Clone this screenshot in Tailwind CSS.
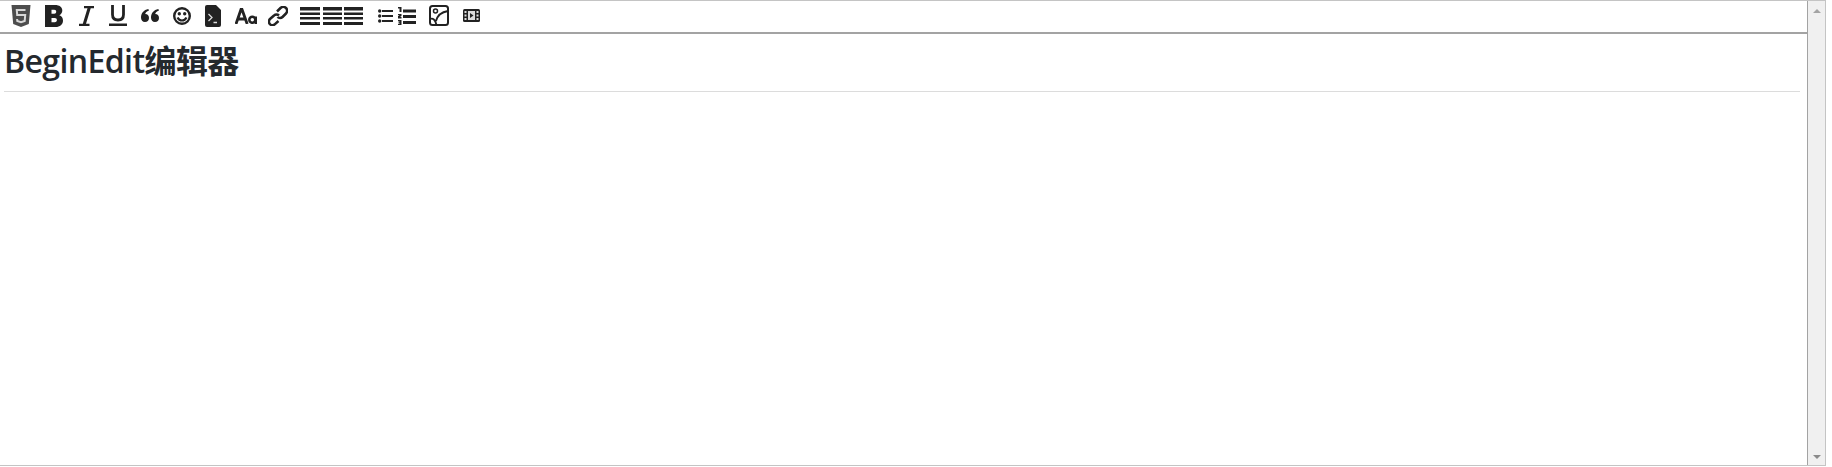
<!DOCTYPE html>
<html lang="zh">
<head>
<meta charset="utf-8">
<title>BeginEdit</title>
<script src="https://cdn.jsdelivr.net/npm/@tailwindcss/browser@4"></script>
</head>
<body class="bg-white overflow-hidden">
<div class="w-[1826px] h-[466px] flex border-t border-r border-b border-[#c4c4c4]">
  <div class="flex-1 min-w-0 flex flex-col border-r border-[#a3a3a3]">
    <div class="h-[33px] shrink-0 flex items-center pl-[11px] pb-[2px] border-b-2 border-[#a3a3a3] text-[#222]">
      <svg class="w-[20px] h-[22px] shrink-0" viewBox="0 0 20 22"><path fill="#4d4d4d" d="M0.500 0h19l-1.700 19L10 22l-7.800-3z"/><path fill="none" stroke="#d8d8d8" stroke-width="2" d="M14.500 5H5.800l.4 5h8l-.5 6-3.700 1.100L6.300 16l-.2-2"/></svg>
      <svg class="w-[18px] h-[22px] shrink-0 ml-[14px]" viewBox="0 0 18 22"><path fill="#222" fill-rule="evenodd" d="M0 0h10c4.500 0 7.300 2.200 7.300 5.500 0 2.200-1.200 3.900-3 4.700 2.500.7 3.700 2.700 3.700 5.300C18 19.500 15 22 10.500 22H0zM6.500 4.800v3.900h2.700c1.300 0 2-.8 2-2s-.7-1.900-2-1.900zM6.500 13v4.200h3.200c1.500 0 2.200-.8 2.200-2.100S11.200 13 9.700 13z"/></svg>
      <svg class="w-[15px] h-[20px] shrink-0 ml-[16px]" viewBox="0 0 15 20"><path fill="#222" d="M5 0h10v2.200h-3.300L7 17.800h3.500V20H0v-2.200h3.800L8.500 2.200H5z"/></svg>
      <svg class="w-[18px] h-[21px] shrink-0 ml-[15px]" viewBox="0 0 18 21"><path fill="none" stroke="#222" stroke-width="2.800" d="M3.500 0v9.500c0 3.500 2 5.500 5.500 5.500s5.500-2 5.500-5.500V0"/><path fill="#222" d="M0 18.500h18V21H0z"/></svg>
      <svg class="w-[18px] h-[13px] shrink-0 ml-[14px]" viewBox="0 0 18 13"><path fill="#222" d="M4 13C1.500 13 0 11.200 0 8.500 0 4 2.800 1 7.300 0L8 1.500C5.700 2.500 4.500 3.600 4.200 5 6.500 5 8 6.500 8 9s-1.700 4-4 4zm10 0c-2.500 0-4-1.800-4-4.500C10 4 12.800 1 17.300 0l.7 1.500c-2.300 1-3.500 2.100-3.800 3.500 2.300 0 3.800 1.500 3.800 4s-1.700 4-4 4z"/></svg>
      <svg class="w-[18px] h-[18px] shrink-0 ml-[14px]" viewBox="0 0 18 18"><circle cx="9" cy="9" r="7.800" fill="none" stroke="#222" stroke-width="2.400"/><circle cx="6.300" cy="6.800" r="1.700" fill="#222"/><circle cx="11.700" cy="6.800" r="1.700" fill="#222"/><path fill="none" stroke="#222" stroke-width="2.200" d="M4.500 10.500c1 2 2.500 3 4.500 3s3.500-1 4.500-3"/></svg>
      <svg class="w-[16px] h-[22px] shrink-0 ml-[14px]" viewBox="0 0 16 22"><path fill="#222" d="M2 0h9l5 5v15a2 2 0 0 1-2 2H2a2 2 0 0 1-2-2V2a2 2 0 0 1 2-2z"/><path fill="none" stroke="#ddd" stroke-width="1.300" d="M3.500 9l3.500 3.500L3.500 16M8.500 17.500h3.500"/></svg>
      <svg class="w-[22px] h-[16px] shrink-0 ml-[14px]" viewBox="0 0 22 16"><path fill="none" stroke="#222" stroke-width="2.800" d="M1 16L6 1.500h1L12.200 16M3 11h7"/><circle cx="17.300" cy="11.800" r="3" fill="none" stroke="#222" stroke-width="2.500"/><path stroke="#222" stroke-width="2.500" d="M20.800 8.500V16"/></svg>
      <svg class="w-[20px] h-[20px] shrink-0 ml-[11px]" viewBox="0 0 20 20"><g fill="none" stroke="#222" stroke-width="2.500"><path d="M9 5.500l3.500-3.500a3.500 3.500 0 0 1 5.500 5.500L14.500 11a3.500 3.500 0 0 1-5 0"/><path d="M11 9.500a3.500 3.500 0 0 0-5 0L2 13a3.500 3.500 0 0 0 5 5.200L10.500 15"/></g></svg>
      <svg class="w-[20px] h-[18px] shrink-0 ml-[12px]" viewBox="0 0 20 18"><path fill="#222" d="M0 0h20v3.500H0zM0 5.500h20v2.500H0zM0 10h20v2.500H0zM0 15h20v3H0z"/></svg>
      <svg class="w-[19px] h-[18px] shrink-0 ml-[3px]" viewBox="0 0 19 18"><path fill="#222" d="M0 0h19v3.500H0zM0 5.500h19v2.500H0zM0 10h19v2.500H0zM0 15h19v3H0z"/></svg>
      <svg class="w-[19px] h-[18px] shrink-0 ml-[2px]" viewBox="0 0 19 18"><path fill="#222" d="M0 0h19v3.500H0zM0 5.500h19v2.500H0zM0 10h19v2.500H0zM0 15h19v3H0z"/></svg>
      <svg class="w-[15px] h-[14px] shrink-0 ml-[15px]" viewBox="0 0 15 14"><path fill="#222" d="M4 1h11v2H4zM4 6h11v2H4zM4 11h11v2H4z"/><circle cx="1.700" cy="2" r="1.700" fill="#222"/><circle cx="1.700" cy="7" r="1.700" fill="#222"/><circle cx="1.700" cy="12" r="1.700" fill="#222"/></svg>
      <svg class="w-[18px] h-[18px] shrink-0 ml-[5px]" viewBox="0 0 18 18"><path fill="#222" d="M5 2.500h13V5.500H5zM5 8h13v3H5zM5 14h13v3H5z"/><path fill="#222" d="M0 0h3.500v5H1.500V1.500H0zM0 7h3.500v2L2 10h1.500v1.500H0V9l1.500-1H0zM0 13h3.500v5H0v-1.300h1.500v-.9H.5v-1h1V14.200H0z"/></svg>
      <svg class="w-[20px] h-[21px] shrink-0 ml-[13px]" viewBox="0 0 20 21"><rect x="1" y="1" width="18" height="19" rx="2.500" fill="none" stroke="#222" stroke-width="2"/><circle cx="6.500" cy="6" r="2" fill="none" stroke="#222" stroke-width="1.500"/><path fill="none" stroke="#222" stroke-width="1.800" d="M1 14c2.500-1 5-.5 6.500 6M7 16c1.500-6 6-9 12-10"/></svg>
      <svg class="w-[17px] h-[13px] shrink-0 ml-[14px]" viewBox="0 0 17 13"><rect width="17" height="13" rx="1.500" fill="#222"/><path fill="#ddd" d="M1.500 2h2v2h-2zM1.500 5.500h2v2h-2zM1.500 9h2v2h-2zM13.500 2h2v2h-2zM13.500 5.500h2v2h-2zM13.500 9h2v2h-2zM5 2h7v9H5z"/><path fill="#222" d="M7 4l3.500 2.500L7 9z"/></svg>
    </div>
    <div class="flex-1 min-h-0 pl-[4px] pr-[7px] font-['Open_Sans','Noto_Sans_CJK_SC',sans-serif] text-[#24292e]">
      <h1 class="h-[58px] border-b border-[#dcdcdc] text-[32px] leading-[54px] font-semibold tracking-[-0.6px]">BeginEdit<span class="font-bold">编辑器</span></h1>
    </div>
  </div>
  <div class="w-[17px] shrink-0 bg-[#f0f0f0] flex flex-col justify-between items-center pt-[8px] pb-[6px]">
    <div class="w-0 h-0 border-x-[4px] border-x-transparent border-b-[4px] border-b-[#a3a3a3]"></div>
    <div class="w-0 h-0 border-x-[4px] border-x-transparent border-t-[4px] border-t-[#8a8a8a]"></div>
  </div>
</div>
</body>
</html>
